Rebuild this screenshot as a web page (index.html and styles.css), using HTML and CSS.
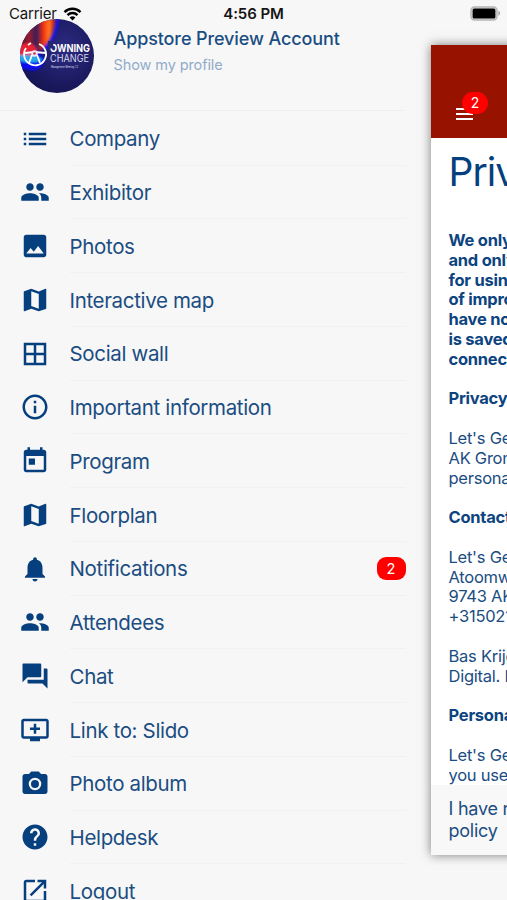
FILE: index.html
```html
<!DOCTYPE html>
<html lang="en">
<head>
<meta charset="utf-8">
<title>Menu</title>
<link rel="stylesheet" href="styles.css">
</head>
<body>
<svg width="0" height="0" class="defs">
  <symbol id="list" viewBox="0 0 24 24"><path d="M3 13h2v-2H3v2zm0 4h2v-2H3v2zm0-8h2V7H3v2zm4 4h14v-2H7v2zm0 4h14v-2H7v2zM7 7v2h14V7H7z"/></symbol>
  <symbol id="people" viewBox="0 0 24 24"><path d="M16 11c1.66 0 2.99-1.34 2.99-3S17.66 5 16 5s-3 1.34-3 3 1.34 3 3 3zm-8 0c1.66 0 2.99-1.34 2.99-3S9.66 5 8 5 5 6.340 5 8s1.340 3 3 3zm0 2c-2.330 0-7 1.170-7 3.500V19h14v-2.500c0-2.330-4.670-3.500-7-3.500zm8 0c-.29 0-.62.020-.97.050 1.160.84 1.970 1.970 1.970 3.450V19h6v-2.500c0-2.330-4.670-3.500-7-3.500z"/></symbol>
  <symbol id="image" viewBox="0 0 24 24"><path d="M21 19V5c0-1.100-.9-2-2-2H5c-1.100 0-2 .9-2 2v14c0 1.100.9 2 2 2h14c1.100 0 2-.9 2-2zM8.500 13.500l2.500 3.010L14.500 12l4.500 6H5l3.500-4.500z"/></symbol>
  <symbol id="map" viewBox="0 0 24 24"><path d="M20.500 3l-.16.030L15 5.100 9 3 3.360 4.900c-.21.070-.36.250-.36.480V20.500c0 .28.220.5.500.5l.16-.03L9 18.900l6 2.100 5.640-1.900c.21-.07.36-.25.36-.48V3.500c0-.28-.22-.5-.5-.5zM15 19l-6-2.110V5l6 2.110V19z"/></symbol>
  <symbol id="grid" viewBox="0 0 24 24"><path d="M3 3v18h18V3H3zm8 16H5v-6h6v6zm0-8H5V5h6v6zm8 8h-6v-6h6v6zm0-8h-6V5h6v6z"/></symbol>
  <symbol id="info" viewBox="0 0 24 24"><path d="M11 17h2v-6h-2v6zm1-15C6.480 2 2 6.480 2 12s4.480 10 10 10 10-4.480 10-10S17.520 2 12 2zm0 18c-4.410 0-8-3.590-8-8s3.590-8 8-8 8 3.590 8 8-3.590 8-8 8zM11 9h2V7h-2v2z"/></symbol>
  <symbol id="today" viewBox="0 0 24 24"><path d="M19 3h-1V1h-2v2H8V1H6v2H5c-1.110 0-1.990.9-1.990 2L3 19c0 1.100.89 2 2 2h14c1.100 0 2-.9 2-2V5c0-1.100-.9-2-2-2zm0 16H5V8h14v11zM7 10h5v5H7z"/></symbol>
  <symbol id="bell" viewBox="0 0 24 24"><path d="M12 22c1.100 0 2-.9 2-2h-4c0 1.100.89 2 2 2zm6-6v-5c0-3.070-1.640-5.640-4.500-6.320V4c0-.83-.67-1.500-1.500-1.500s-1.500.67-1.500 1.500v.68C7.630 5.360 6 7.920 6 11v5l-2 2v1h16v-1l-2-2z"/></symbol>
  <symbol id="chat" viewBox="0 0 24 24"><path d="M21 6h-2v9H6v2c0 .55.450 1 1 1h11l4 4V7c0-.55-.45-1-1-1zm-4 6V3c0-.55-.45-1-1-1H3c-.55 0-1 .45-1 1v14l4-4h10c.55 0 1-.45 1-1z"/></symbol>
  <symbol id="screen" viewBox="0 0 24 24"><path d="M21 3H3c-1.110 0-2 .89-2 2v12c0 1.100.89 2 2 2h5v2h8v-2h5c1.100 0 1.990-.9 1.990-2L23 5c0-1.110-.9-2-2-2zm0 14H3V5h18v12zm-5-7v2h-3v3h-2v-3H8v-2h3V7h2v3h3z"/></symbol>
  <symbol id="camera" viewBox="0 0 24 24"><path fill-rule="evenodd" d="M9 2L7.170 4H4c-1.100 0-2 .9-2 2v12c0 1.100.9 2 2 2h16c1.100 0 2-.9 2-2V6c0-1.100-.9-2-2-2h-3.170L15 2H9zM12 17a5 5 0 1 1 0-10 5 5 0 0 1 0 10zM12 8.800a3.200 3.200 0 1 0 0 6.400 3.200 3.200 0 0 0 0-6.400z"/></symbol>
  <symbol id="help" viewBox="0 0 24 24"><path d="M12 2C6.480 2 2 6.480 2 12s4.480 10 10 10 10-4.480 10-10S17.520 2 12 2zm1 17h-2v-2h2v2zm2.070-7.750l-.9.920C13.450 12.900 13 13.500 13 15h-2v-.5c0-1.100.45-2.100 1.170-2.830l1.240-1.260c.37-.36.590-.86.590-1.410 0-1.100-.9-2-2-2s-2 .9-2 2H8c0-2.210 1.790-4 4-4s4 1.790 4 4c0 .88-.36 1.680-.93 2.250z"/></symbol>
  <symbol id="open" viewBox="0 0 24 24"><path d="M19 19H5V5h7V3H5c-1.110 0-2 .9-2 2v14c0 1.100.89 2 2 2h14c1.100 0 2-.9 2-2v-7h-2v7zM14 3v2h3.590l-9.830 9.830 1.410 1.410L19 6.410V10h2V3h-7z"/></symbol>
</svg>
<div class="screen">
  <div class="status">
    <div class="carrier"><span>Carrier</span>
      <svg class="wifi" viewBox="0 0 19 14"><path d="M9.500 13.500L6.600 10.600a4.100 4.100 0 0 1 5.800 0z"/><path d="M4.500 8.100a7.100 7.100 0 0 1 10 0M1.500 5.100a11.300 11.300 0 0 1 16 0" fill="none" stroke="#000" stroke-width="2.400"/></svg>
    </div>
    <div class="time">4:56 PM</div>
    <svg class="battery" viewBox="0 0 31 15"><rect x="1" y="1" width="26" height="13" rx="3.500" fill="#ddd" stroke="#b5b5b5" stroke-width="1.400"/><rect x="2.600" y="2.600" width="22.800" height="9.800" rx="1.500"/><path d="M28.300 4.800c2.400 1 2.400 4 0 5z" fill="#a9a9a9"/></svg>
  </div>
  <nav class="menu">
    <header class="account">
      <svg class="avatar" viewBox="0 0 74 74">
        <defs>
          <clipPath id="round"><circle cx="37" cy="37" r="37"/></clipPath>
          <radialGradient id="navy" cx=".6" cy=".4" r=".65"><stop offset="0" stop-color="#2c2b83"/><stop offset="1" stop-color="#151452"/></radialGradient>
          <linearGradient id="flame" x1="0" x2="1"><stop offset="0" stop-color="#31103b"/><stop offset=".3" stop-color="#9b1c2c"/><stop offset=".5" stop-color="#30205c"/><stop offset=".68" stop-color="#f22d0e"/><stop offset=".84" stop-color="#ff7a22"/><stop offset="1" stop-color="#c00b18"/></linearGradient>
          <filter id="soft"><feGaussianBlur stdDeviation=".8"/></filter>
        </defs>
        <g clip-path="url(#round)">
          <rect width="74" height="74" fill="url(#navy)"/>
          <g filter="url(#soft)">
            <path d="M-2 0H35C34 16 27 25 21 31L-2 36z" fill="url(#flame)"/>
            <path d="M38-2C37 16 30 25 24 30" fill="none" stroke="#1519e8" stroke-width="3"/>
            <path d="M-2 30L16 29 25 41C21 54 10 54-2 47z" fill="#0711ec"/>
            <path d="M-2 28C8 20 15 25 18 33L14 37-2 36z" fill="#e82435"/>
            <path d="M-2 36L15 36 23 41C14 45 7 43-2 42z" fill="#27a9ed"/>
          </g>
          <g fill="none" stroke="#fff" stroke-width="1.800"><path d="M19 25A11 11 0 1 1 6 29M8 26L11 24"/><path d="M5 34L14 33 26 34M12 36L9 44M17 36L20 44"/></g>
          <circle cx="14.500" cy="34.500" r="3.200" fill="#e9eefb"/><circle cx="14.500" cy="34.500" r="1.300" fill="#dd2637"/>
          <text x="30" y="33" class="logo-bold" textLength="40" lengthAdjust="spacingAndGlyphs">OWNING</text>
          <path d="M28 22H33.200V29.500H28z" fill="#262678"/>
          <text x="30" y="43" class="logo-thin" textLength="39" lengthAdjust="spacingAndGlyphs">CHANGE</text>
          <text x="31" y="48.600" class="logo-tiny" textLength="27" lengthAdjust="spacingAndGlyphs">Management Meeting ’22</text>
        </g>
      </svg>
      <div class="who"><div class="name">Appstore Preview Account</div><div class="profile">Show my profile</div></div>
    </header>
    <ul class="items">
      <li><svg><use href="#list"/></svg><div><span>Company</span></div></li>
      <li><svg><use href="#people"/></svg><div><span>Exhibitor</span></div></li>
      <li><svg><use href="#image"/></svg><div><span>Photos</span></div></li>
      <li><svg><use href="#map"/></svg><div><span>Interactive map</span></div></li>
      <li><svg><use href="#grid"/></svg><div><span>Social wall</span></div></li>
      <li><svg><use href="#info"/></svg><div><span>Important information</span></div></li>
      <li><svg><use href="#today"/></svg><div><span>Program</span></div></li>
      <li><svg><use href="#map"/></svg><div><span>Floorplan</span></div></li>
      <li><svg><use href="#bell"/></svg><div><span>Notifications</span><b class="count">2</b></div></li>
      <li><svg><use href="#people"/></svg><div><span>Attendees</span></div></li>
      <li><svg><use href="#chat"/></svg><div><span>Chat</span></div></li>
      <li><svg><use href="#screen"/></svg><div><span>Link to: Slido</span></div></li>
      <li><svg><use href="#camera"/></svg><div><span>Photo album</span></div></li>
      <li><svg><use href="#help"/></svg><div><span>Helpdesk</span></div></li>
      <li><svg><use href="#open"/></svg><div><span>Logout</span></div></li>
    </ul>
  </nav>
  <main class="page">
    <div class="bar"><div class="burger"><i></i><i></i><i></i><b>2</b></div></div>
    <article class="policy">
      <h1>Privacy</h1>
      <h2>We only<br>and only<br>for using<br>of improving<br>have not<br>is saved<br>connected</h2>
      <h2>Privacy</h2>
      <p>Let's Get<br>AK Groningen<br>personal</p>
      <h2>Contact</h2>
      <p>Let's Get<br>Atoomweg<br>9743 AK<br>+315021</p>
      <p>Bas Krijgsman<br>Digital. He</p>
      <h2>Personal</h2>
      <p>Let's Get<br>you use</p>
    </article>
    <footer>I have read<br>policy</footer>
  </main>
</div>
</body>
</html>
```
FILE: styles.css
```css
* { box-sizing: border-box; }
body { margin: 0; background: #f7f7f7; font-family: Inter, "Liberation Sans", sans-serif; color: #1b4d82; }
.defs { position: absolute; }
.screen { position: relative; display: flex; width: 507px; height: 900px; overflow: hidden; }
.status { position: absolute; z-index: 3; top: 4px; left: 0; right: 0; height: 17px; padding: 0 6px 0 9px; display: grid; grid-template-columns: 1fr auto 1fr; align-items: center; color: #151515; font-size: 15px; }
.carrier { display: flex; align-items: center; gap: 6px; letter-spacing: -.200px; }
.wifi { width: 19px; height: 14px; }
.time { position: relative; left: -1.500px; font-weight: 600; letter-spacing: -.1px; }
.battery { width: 31px; height: 15px; justify-self: end; }

.menu { flex: 0 0 431px; }
.account { display: flex; height: 111px; width: 405px; padding: 19px 0 0 20px; border-bottom: 1px solid #efefef; }
.avatar { width: 74px; height: 74px; flex: none; }
.logo-bold { font: 700 10.500px Inter, sans-serif; fill: #fff; }
.logo-thin { font: 400 10px Inter, sans-serif; fill: #d8d8ec; }
.logo-tiny { font: 500 3px Inter, sans-serif; fill: #c8c8e4; }
.who { padding: 8px 0 0 19.500px; white-space: nowrap; }
.name { font-size: 18px; line-height: 24px; font-weight: 500; letter-spacing: -.110px; }
.profile { margin-top: 4.500px; font-size: 14.500px; line-height: 18px; letter-spacing: -.1px; color: #91abc9; }
.items { margin: 0; padding: .800px 0 0 20px; list-style: none; }
.items li { display: flex; align-items: center; height: 53.750px; }
.items li > svg { width: 30px; height: 30px; fill: #063f7e; flex: none; }
.items li > div { display: flex; align-items: center; justify-content: space-between; width: 336px; height: 100%; margin-left: 19.500px; border-bottom: 1px solid #f1f1f1; padding-top: 1.500px; font-size: 20.500px; letter-spacing: -.340px; }
.count { display: grid; place-items: center; width: 29px; height: 23px; border-radius: 9px; background: #f00; color: #fff; font-size: 14.500px; font-weight: 400; letter-spacing: 0; }

.page { flex: 0 0 400px; display: flex; flex-direction: column; height: 810px; margin-top: 45px; background: #fff; box-shadow: 0 0 10px rgba(0,0,0,.5); white-space: nowrap; }
.bar { flex: none; height: 93px; padding: 63px 0 0 25px; background: #971300; }
.burger { position: relative; display: grid; gap: 3px; width: 17px; }
.burger i { height: 2px; background: #fff; }
.burger b { position: absolute; left: 6px; top: -16px; width: 26px; height: 22px; border-radius: 11px; background: #f00; color: #fff; font-size: 14px; font-weight: 400; line-height: 22px; text-align: center; }
.policy { flex: 1; padding: 10px 17.500px 0; overflow: hidden; font-size: 16.500px; line-height: 19.800px; letter-spacing: -.250px; }
.policy h1 { margin: 0 0 35px; font-size: 39px; line-height: 48px; font-weight: 400; letter-spacing: -1px; color: #063f7e; }
.policy h2 { margin: 0 0 19.800px; font-size: inherit; line-height: inherit; font-weight: 700; color: #0d4480; }
.policy p { margin: 0 0 19.800px; }
.page footer { flex: none; height: 70px; padding: 13px 17.500px 0; background: #f8f8f8; font-size: 18px; line-height: 22px; letter-spacing: -.250px; }
```
